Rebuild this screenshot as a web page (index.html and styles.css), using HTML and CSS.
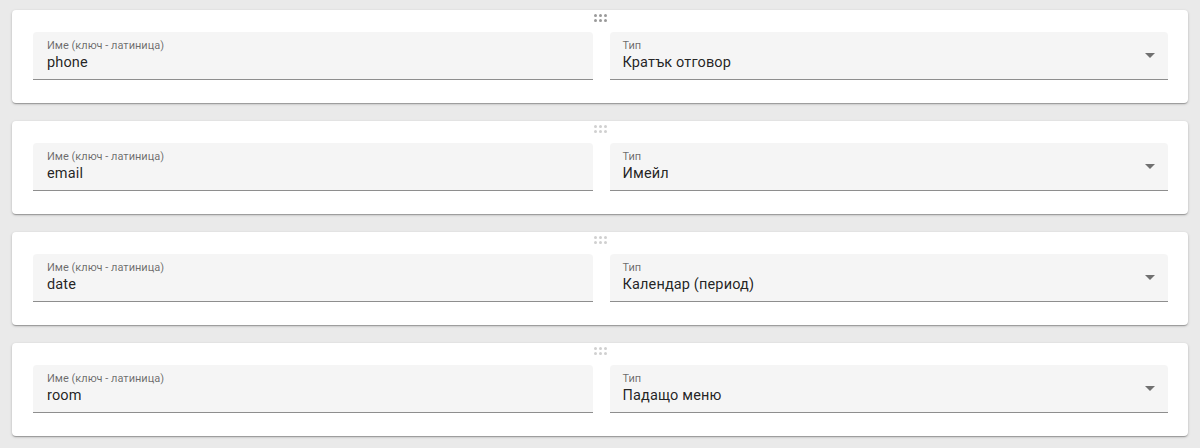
FILE: index.html
```html
<!DOCTYPE html>
<html lang="bg">
<head>
<meta charset="utf-8">
<link rel="stylesheet" href="styles.css">
</head>
<body>
<div class="list">
  <div class="card">
    <div class="handle handle-active"><svg width="14" height="8" viewBox="0 0 14 8"><circle cx="1.5" cy="1.5" r="1.5"/><circle cx="6.5" cy="1.5" r="1.5"/><circle cx="11.5" cy="1.5" r="1.5"/><circle cx="1.5" cy="6.5" r="1.5"/><circle cx="6.5" cy="6.5" r="1.5"/><circle cx="11.5" cy="6.5" r="1.5"/></svg></div>
    <div class="row">
      <div class="field"><div class="label">Име (ключ - латиница)</div><div class="value">phone</div></div>
      <div class="field select"><div class="label">Тип</div><div class="value">Кратък отговор</div><span class="arrow"></span></div>
    </div>
  </div>
  <div class="card">
    <div class="handle"><svg width="14" height="8" viewBox="0 0 14 8"><circle cx="1.5" cy="1.5" r="1.5"/><circle cx="6.5" cy="1.5" r="1.5"/><circle cx="11.5" cy="1.5" r="1.5"/><circle cx="1.5" cy="6.5" r="1.5"/><circle cx="6.5" cy="6.5" r="1.5"/><circle cx="11.5" cy="6.5" r="1.5"/></svg></div>
    <div class="row">
      <div class="field"><div class="label">Име (ключ - латиница)</div><div class="value">email</div></div>
      <div class="field select"><div class="label">Тип</div><div class="value">Имейл</div><span class="arrow"></span></div>
    </div>
  </div>
  <div class="card">
    <div class="handle"><svg width="14" height="8" viewBox="0 0 14 8"><circle cx="1.5" cy="1.5" r="1.5"/><circle cx="6.5" cy="1.5" r="1.5"/><circle cx="11.5" cy="1.5" r="1.5"/><circle cx="1.5" cy="6.5" r="1.5"/><circle cx="6.5" cy="6.5" r="1.5"/><circle cx="11.5" cy="6.5" r="1.5"/></svg></div>
    <div class="row">
      <div class="field"><div class="label">Име (ключ - латиница)</div><div class="value">date</div></div>
      <div class="field select"><div class="label">Тип</div><div class="value">Календар (период)</div><span class="arrow"></span></div>
    </div>
  </div>
  <div class="card">
    <div class="handle"><svg width="14" height="8" viewBox="0 0 14 8"><circle cx="1.5" cy="1.5" r="1.5"/><circle cx="6.5" cy="1.5" r="1.5"/><circle cx="11.5" cy="1.5" r="1.5"/><circle cx="1.5" cy="6.5" r="1.5"/><circle cx="6.5" cy="6.5" r="1.5"/><circle cx="11.5" cy="6.5" r="1.5"/></svg></div>
    <div class="row">
      <div class="field"><div class="label">Име (ключ - латиница)</div><div class="value">room</div></div>
      <div class="field select"><div class="label">Тип</div><div class="value">Падащо меню</div><span class="arrow"></span></div>
    </div>
  </div>
</div>
</body>
</html>
```
FILE: styles.css
```css
html, body {
  margin: 0;
  padding: 0;
  background: #eaeaea;
  font-family: Roboto, "Noto Sans", sans-serif;
}
.list {
  display: flex;
  flex-direction: column;
  gap: 18px;
  padding: 10px 12px;
}
.card {
  background: #fff;
  border-radius: 4px;
  box-shadow: 0 1px 3px rgba(0,0,0,0.2), 0 1px 1px rgba(0,0,0,0.14), 0 2px 1px -1px rgba(0,0,0,0.12);
  padding: 0 20px 23px 21px;
}
.handle {
  height: 22px;
  display: flex;
  justify-content: center;
  align-items: flex-start;
  padding-top: 4px;
  box-sizing: border-box;
}
.handle svg { display: block; fill: #d0d0d0; }
.handle-active svg { fill: #9a9a9a; }
.row {
  display: flex;
  gap: 17px;
}
.field {
  position: relative;
  flex: 1;
  height: 48px;
  box-sizing: border-box;
  background: #f5f5f5;
  border-radius: 4px 4px 0 0;
  border-bottom: 1px solid rgba(0,0,0,0.42);
  padding: 8px 14px 0;
}
.select { padding-left: 13px; }
.label {
  font-size: 11px;
  line-height: 12px;
  color: rgba(0,0,0,0.58);
  margin-bottom: 2px;
}
.value {
  font-size: 14.5px;
  line-height: 18px;
  color: rgba(0,0,0,0.87);
  letter-spacing: 0.15px;
}
.arrow {
  position: absolute;
  right: 13px;
  top: 21px;
  width: 0;
  height: 0;
  border-left: 5px solid transparent;
  border-right: 5px solid transparent;
  border-top: 5px solid rgba(0,0,0,0.54);
}
```
